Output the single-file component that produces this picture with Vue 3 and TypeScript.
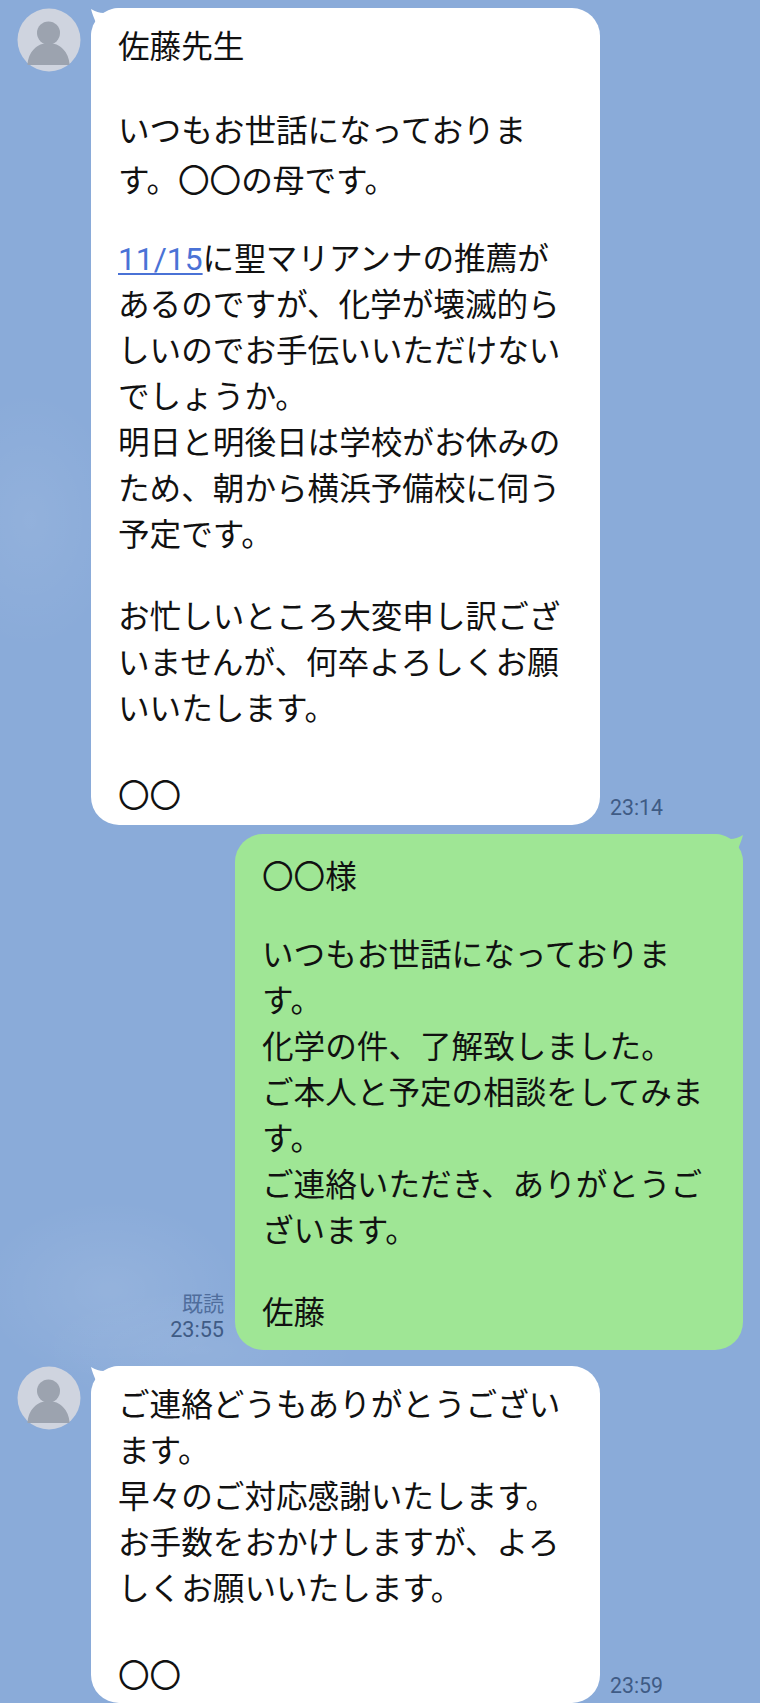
<script setup lang="ts">
interface Line { t: string; h: number; link?: string }
const first: Line[] = [
  { t: '佐藤先生', h: 46 },
  { t: '', h: 38 },
  { t: 'いつもお世話になっておりま', h: 46 },
  { t: 'す。〇〇の母です。', h: 54 },
  { t: '', h: 28 },
  { link: '11/15', t: 'に聖マリアンナの推薦が', h: 46 },
  { t: 'あるのですが、化学が壊滅的ら', h: 46 },
  { t: 'しいのでお手伝いいただけない', h: 46 },
  { t: 'でしょうか。', h: 46 },
  { t: '明日と明後日は学校がお休みの', h: 46 },
  { t: 'ため、朝から横浜予備校に伺う', h: 46 },
  { t: '予定です。', h: 46 },
  { t: '', h: 36 },
  { t: 'お忙しいところ大変申し訳ござ', h: 46 },
  { t: 'いませんが、何卒よろしくお願', h: 46 },
  { t: 'いいたします。', h: 46 },
  { t: '', h: 41 },
  { t: '〇〇', h: 46 },
]
const second: Line[] = [
  { t: '〇〇様', h: 46 },
  { t: '', h: 32 },
  { t: 'いつもお世話になっておりま', h: 46 },
  { t: 'す。', h: 46 },
  { t: '化学の件、了解致しました。', h: 46 },
  { t: 'ご本人と予定の相談をしてみま', h: 46 },
  { t: 'す。', h: 46 },
  { t: 'ご連絡いただき、ありがとうご', h: 46 },
  { t: 'ざいます。', h: 46 },
  { t: '', h: 36 },
  { t: '佐藤', h: 46 },
]
const third: Line[] = [
  { t: 'ご連絡どうもありがとうござい', h: 46 },
  { t: 'ます。', h: 46 },
  { t: '早々のご対応感謝いたします。', h: 46 },
  { t: 'お手数をおかけしますが、よろ', h: 46 },
  { t: 'しくお願いいたします。', h: 46 },
  { t: '', h: 41 },
  { t: '〇〇', h: 46 },
]
</script>

<template>
  <div class="page">
    <div class="row row-first">
      <svg class="avatar" viewBox="0 0 64 64" aria-hidden="true">
        <circle cx="32" cy="32" r="31.5" fill="#cfd4df" />
        <circle cx="31.500" cy="25" r="11.500" fill="#9ca3af" />
        <path d="M10.500 57C11 44 20 35 31.500 35S52 44 52.500 57Z" fill="#9ca3af" />
      </svg>
      <div class="bubble white">
        <svg class="tail tail-left" viewBox="0 0 30 30" aria-hidden="true">
          <path d="M0 1C5 4 10 5.500 14 5C18 3 22 0 30 0V30H0C0 24 2 19 5 15C3 10 1 5 0 1Z" fill="#fff" />
        </svg>
        <div v-for="(l, i) in first" :key="i" class="line" :style="{ height: l.h + 'px', lineHeight: l.h + 'px' }"><span v-if="l.link" class="link">{{ l.link }}</span>{{ l.t }}</div>
      </div>
      <span class="time">23:14</span>
    </div>

    <div class="row row-second">
      <div class="meta">
        <span>既読</span>
        <span class="meta-time">23:55</span>
      </div>
      <div class="bubble green">
        <svg class="tail tail-right" viewBox="0 0 30 30" aria-hidden="true">
          <path d="M0 1C5 4 10 5.500 14 5C18 3 22 0 30 0V30H0C0 24 2 19 5 15C3 10 1 5 0 1Z" fill="#9fe695" />
        </svg>
        <div v-for="(l, i) in second" :key="i" class="line" :style="{ height: l.h + 'px', lineHeight: l.h + 'px' }">{{ l.t }}</div>
      </div>
    </div>

    <div class="row row-third">
      <svg class="avatar" viewBox="0 0 64 64" aria-hidden="true">
        <circle cx="32" cy="32" r="31.5" fill="#cfd4df" />
        <circle cx="31.500" cy="25" r="11.500" fill="#9ca3af" />
        <path d="M10.500 57C11 44 20 35 31.500 35S52 44 52.500 57Z" fill="#9ca3af" />
      </svg>
      <div class="bubble white">
        <svg class="tail tail-left" viewBox="0 0 30 30" aria-hidden="true">
          <path d="M0 1C5 4 10 5.500 14 5C18 3 22 0 30 0V30H0C0 24 2 19 5 15C3 10 1 5 0 1Z" fill="#fff" />
        </svg>
        <div v-for="(l, i) in third" :key="i" class="line" :style="{ height: l.h + 'px', lineHeight: l.h + 'px' }">{{ l.t }}</div>
      </div>
      <span class="time">23:59</span>
    </div>
  </div>
</template>

<style scoped>
.page {
  box-sizing: border-box;
  width: 760px;
  height: 1703px;
  overflow: hidden;
  padding-top: 8px;
  display: flex;
  flex-direction: column;
  background-color: #8aabd9;
  background-image:
    radial-gradient(ellipse 90px 130px at 30px 520px, rgba(255, 255, 255, 0.07), transparent),
    radial-gradient(ellipse 130px 90px at 110px 1290px, rgba(255, 255, 255, 0.09), transparent),
    radial-gradient(ellipse 160px 60px at 200px 1350px, rgba(255, 255, 255, 0.07), transparent);
  font-family: "Noto Sans CJK JP", "Liberation Sans", sans-serif;
  color: #111;
}
.row {
  display: flex;
  align-items: flex-start;
  flex-shrink: 0;
}
.row-first {
  padding-left: 17px;
}
.row-second {
  margin-top: 9px;
  padding-right: 17px;
  justify-content: flex-end;
  align-items: flex-end;
}
.row-third {
  margin-top: 16px;
  padding-left: 17px;
}
.avatar {
  width: 64px;
  height: 64px;
  flex-shrink: 0;
}
.bubble {
  position: relative;
  box-sizing: border-box;
  flex-shrink: 0;
  border-radius: 28px;
  font-size: 31.600px;
  white-space: nowrap;
}
.white {
  width: 509px;
  margin-left: 10px;
  padding: 13px 20px 9px 27px;
  background: #fff;
}
.green {
  width: 508px;
  padding: 17px 20px 17px 27px;
  background: #9fe695;
}
.row-third .bubble {
  height: 337px;
}
.tail {
  position: absolute;
  top: 0;
  width: 30px;
  height: 30px;
}
.tail-left {
  left: 0;
}
.tail-right {
  right: 0;
  transform: scaleX(-1);
}
.link {
  font-family: Roboto, sans-serif;
  font-size: 31.800px;
  color: #4a72d6;
  text-decoration: underline;
  text-underline-offset: 3px;
  text-decoration-thickness: 1.500px;
}
.time {
  align-self: flex-end;
  margin: 0 0 5px 10px;
  font-family: Roboto, sans-serif;
  font-size: 21.300px;
  line-height: 25px;
  color: #3f5b85;
}
.meta {
  display: flex;
  flex-direction: column;
  align-items: flex-end;
  margin: 0 11px 7px 0;
  font-size: 21px;
  line-height: 27px;
  color: #4f6d9c;
}
.meta-time {
  font-family: Roboto, sans-serif;
  font-size: 21.600px;
  color: #3f5b85;
}
</style>
